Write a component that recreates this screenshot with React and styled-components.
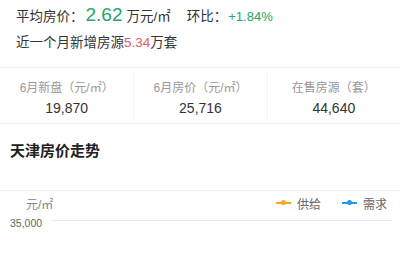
import React from 'react';
import styled, { createGlobalStyle } from 'styled-components';

const GlobalStyle = createGlobalStyle`
  html, body {
    margin: 0;
    padding: 0;
    background: #fff;
  }
  body {
    font-family: "Liberation Sans", "Noto Sans CJK SC", sans-serif;
    color: #333;
  }
`;

const Page = styled.div`
  width: 400px;
  height: 260px;
  overflow: hidden;
  display: flex;
  flex-direction: column;
`;

const Summary = styled.div`
  padding: 2px 16px 14px;
  display: flex;
  flex-direction: column;
`;

const PriceRow = styled.div`
  display: flex;
  align-items: baseline;
  height: 26px;
  line-height: 26px;
  font-size: 13.5px;
  color: #333;
`;

const Big = styled.span`
  font-size: 19px;
  color: #27a36b;
  margin: 0 4px 0 2px;
`;

const Change = styled.span`
  font-size: 13px;
  color: #27a36b;
  margin-left: 1px;
`;

const Gap = styled.span`
  width: 16px;
`;

const NewRow = styled.div`
  margin-top: 5px;
  line-height: 20px;
  font-size: 13.5px;
  color: #333;
`;

const Hot = styled.span`
  color: #e55a67;
`;

const Stats = styled.div`
  display: grid;
  grid-template-columns: repeat(3, 1fr);
  border-top: 1px solid #f2f2f2;
  border-bottom: 1px solid #f2f2f2;
  padding: 3px 0;
`;

const Cell = styled.div`
  display: flex;
  flex-direction: column;
  align-items: center;
  padding: 8px 0 3px;
  border-left: ${p => (p.$first ? 'none' : '1px solid #f4f4f4')};
`;

const Label = styled.div`
  font-size: 12px;
  line-height: 18px;
  color: #999;
`;

const Value = styled.div`
  margin-top: 2px;
  font-size: 14px;
  line-height: 18px;
  color: #333;
`;

const Title = styled.h2`
  margin: 16px 0 0;
  padding: 0 10px 28px;
  font-size: 15px;
  line-height: 22px;
  font-weight: bold;
  color: #222;
  border-bottom: 1px solid #f2f2f2;
`;

const ChartHead = styled.div`
  display: flex;
  align-items: center;
  justify-content: space-between;
  margin-top: 4px;
  padding: 0 13px 0 26px;
  height: 16px;
  font-size: 12px;
  color: #888;
`;

const Legend = styled.div`
  display: flex;
  align-items: center;
  gap: 21px;
  color: #666;
`;

const LegendItem = styled.div`
  display: flex;
  align-items: center;
  gap: 6px;
`;

const Marker = styled.span`
  position: relative;
  width: 15px;
  height: 2px;
  background: ${p => p.$color};

  &::after {
    content: "";
    position: absolute;
    left: 5px;
    top: -2px;
    width: 5px;
    height: 5px;
    border-radius: 50%;
    background: ${p => p.$color};
  }
`;

const AxisRow = styled.div`
  display: flex;
  align-items: flex-start;
  margin-top: 5px;
  padding: 0 8px 0 10px;
`;

const Tick = styled.span`
  font-size: 10.5px;
  line-height: 14px;
  color: #666;
`;

const GridLine = styled.div`
  flex: 1;
  height: 1px;
  margin: 4px 0 0 10px;
  background: #e8e8e8;
`;

const stats = [
  { label: '6月新盘（元/㎡）', value: '19,870' },
  { label: '6月房价（元/㎡）', value: '25,716' },
  { label: '在售房源（套）', value: '44,640' },
];

export default function App() {
  return (
    <Page>
      <GlobalStyle />
      <Summary>
        <PriceRow>
          平均房价：<Big>2.62</Big>万元/㎡
          <Gap />
          环比：<Change>+1.84%</Change>
        </PriceRow>
        <NewRow>
          近一个月新增房源<Hot>5.34</Hot>万套
        </NewRow>
      </Summary>
      <Stats>
        {stats.map((s, i) => (
          <Cell key={s.label} $first={i === 0}>
            <Label>{s.label}</Label>
            <Value>{s.value}</Value>
          </Cell>
        ))}
      </Stats>
      <Title>天津房价走势</Title>
      <ChartHead>
        <span>元/㎡</span>
        <Legend>
          <LegendItem>
            <Marker $color="#f5a623" />
            供给
          </LegendItem>
          <LegendItem>
            <Marker $color="#2196f3" />
            需求
          </LegendItem>
        </Legend>
      </ChartHead>
      <AxisRow>
        <Tick>35,000</Tick>
        <GridLine />
      </AxisRow>
    </Page>
  );
}
